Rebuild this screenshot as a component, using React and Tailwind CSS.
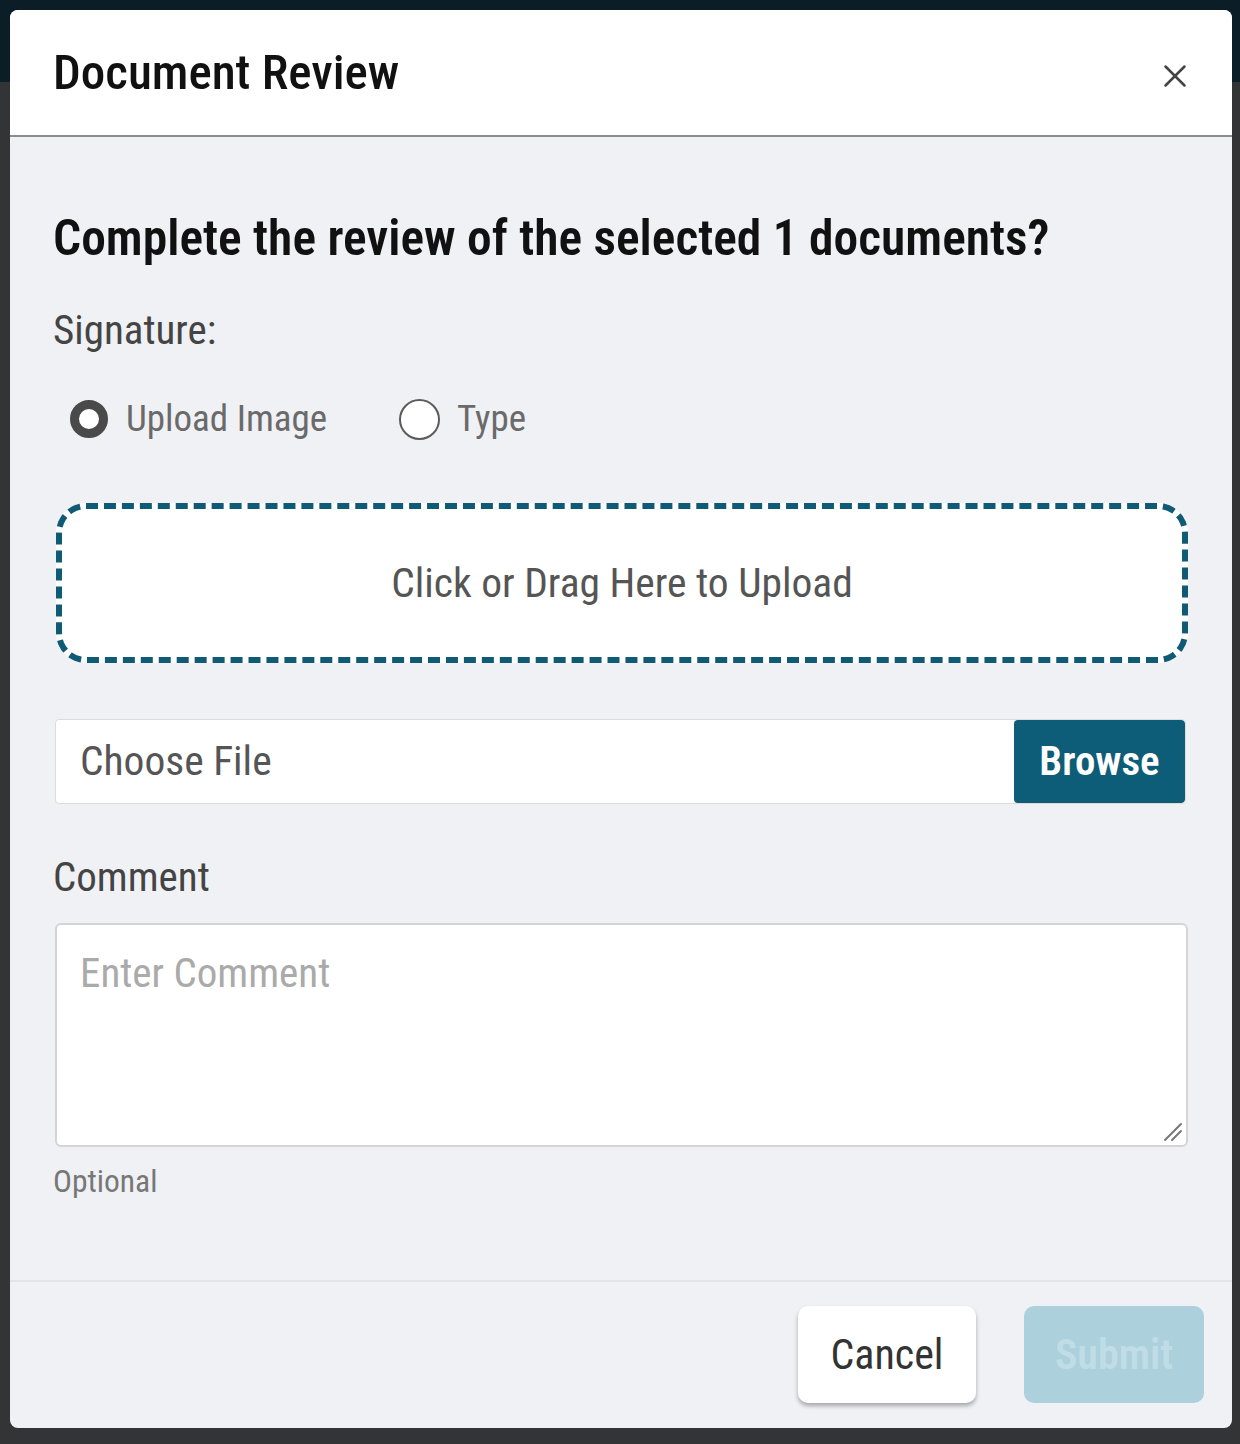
import { X } from 'lucide-react'

export default function App() {
  return (
    <div className="w-[1240px] h-[1444px] pt-[10px] px-[10px] bg-[linear-gradient(to_bottom,#0b1e27_0,#0b1e27_82px,#333436_82px)] font-['Roboto_Condensed','Roboto',sans-serif] font-stretch-condensed">
      <div className="w-[1222px] h-[1418px] rounded-[8px] overflow-hidden flex flex-col bg-[#f0f1f5]">
        <div className="h-[127px] shrink-0 bg-white border-b-2 border-[#8c8c8c] flex items-center justify-between pl-[43px] pr-[38px]">
          <h2 className="text-[49px] leading-none font-medium text-[#111]">Document Review</h2>
          <button className="text-[#444] pt-[6px]">
            <X size={38} strokeWidth={1.6} />
          </button>
        </div>

        <div className="flex-1 px-[43px] pt-[73px]">
          <p className="text-[49.5px] leading-[56px] font-semibold text-[#111]">Complete the review of the selected 1 documents?</p>
          <p className="mt-[39px] text-[41px] leading-[50px] text-[#444]">Signature:</p>

          <div className="mt-[41px] flex items-center gap-[72px] pl-[17px]">
            <label className="flex items-center gap-[18px]">
              <span className="w-[38px] h-[38px] rounded-full border-[9px] border-[#4a4a4a] bg-white" />
              <span className="text-[37px] leading-[46px] text-[#6a6a6a]">Upload Image</span>
            </label>
            <label className="flex items-center gap-[17px]">
              <span className="w-[41px] h-[41px] rounded-full border-[2.5px] border-[#5a5a5a] bg-white" />
              <span className="text-[37px] leading-[46px] text-[#6a6a6a]">Type</span>
            </label>
          </div>

          <div className="mt-[61px] ml-[3px] w-[1132px] h-[160px] rounded-[30px] border-[6px] border-dashed border-[#0f5a74] bg-white flex items-center justify-center">
            <span className="text-[41.5px] text-[#555]">Click or Drag Here to Upload</span>
          </div>

          <div className="mt-[56px] ml-[2px] w-[1131px] h-[85px] flex rounded-[4px] border border-[#dcdcdc] bg-white overflow-hidden">
            <div className="flex-1 flex items-center pl-[24px] text-[41.5px] text-[#555]">Choose File</div>
            <button className="w-[171px] bg-[#0d5d78] text-white text-[41px] font-semibold rounded-[4px]">Browse</button>
          </div>

          <p className="mt-[49px] text-[41px] leading-[48px] text-[#444]">Comment</p>

          <div className="mt-[22px] ml-[2px] w-[1133px] h-[224px] rounded-[6px] border-2 border-[#d4d4d8] bg-white relative">
            <textarea
              placeholder="Enter Comment"
              className="w-full h-full resize-none outline-none bg-transparent px-[23px] pt-[24px] text-[41px] leading-[48px] placeholder:text-[#aaa]"
            />
            <svg className="absolute right-[3px] bottom-[3px]" width="22" height="22" viewBox="0 0 22 22">
              <path d="M4 20 L20 4 M11 20 L20 11" stroke="#777" strokeWidth="2" strokeLinecap="round" />
            </svg>
          </div>

          <p className="mt-[17px] text-[31.5px] leading-[36px] text-[#777]">Optional</p>
        </div>

        <div className="h-[148px] shrink-0 border-t-2 border-[#e3e4ea] flex items-center justify-end gap-[48px] pr-[28px] pb-[2px]">
          <button className="w-[178px] h-[97px] rounded-[10px] bg-white text-[42px] text-[#333] shadow-[0_3px_4px_rgba(0,0,0,0.3)]">Cancel</button>
          <button className="w-[180px] h-[97px] rounded-[10px] bg-[#acd0dc] text-[42px] font-semibold text-[#c0dde6]">Submit</button>
        </div>
      </div>
    </div>
  )
}
